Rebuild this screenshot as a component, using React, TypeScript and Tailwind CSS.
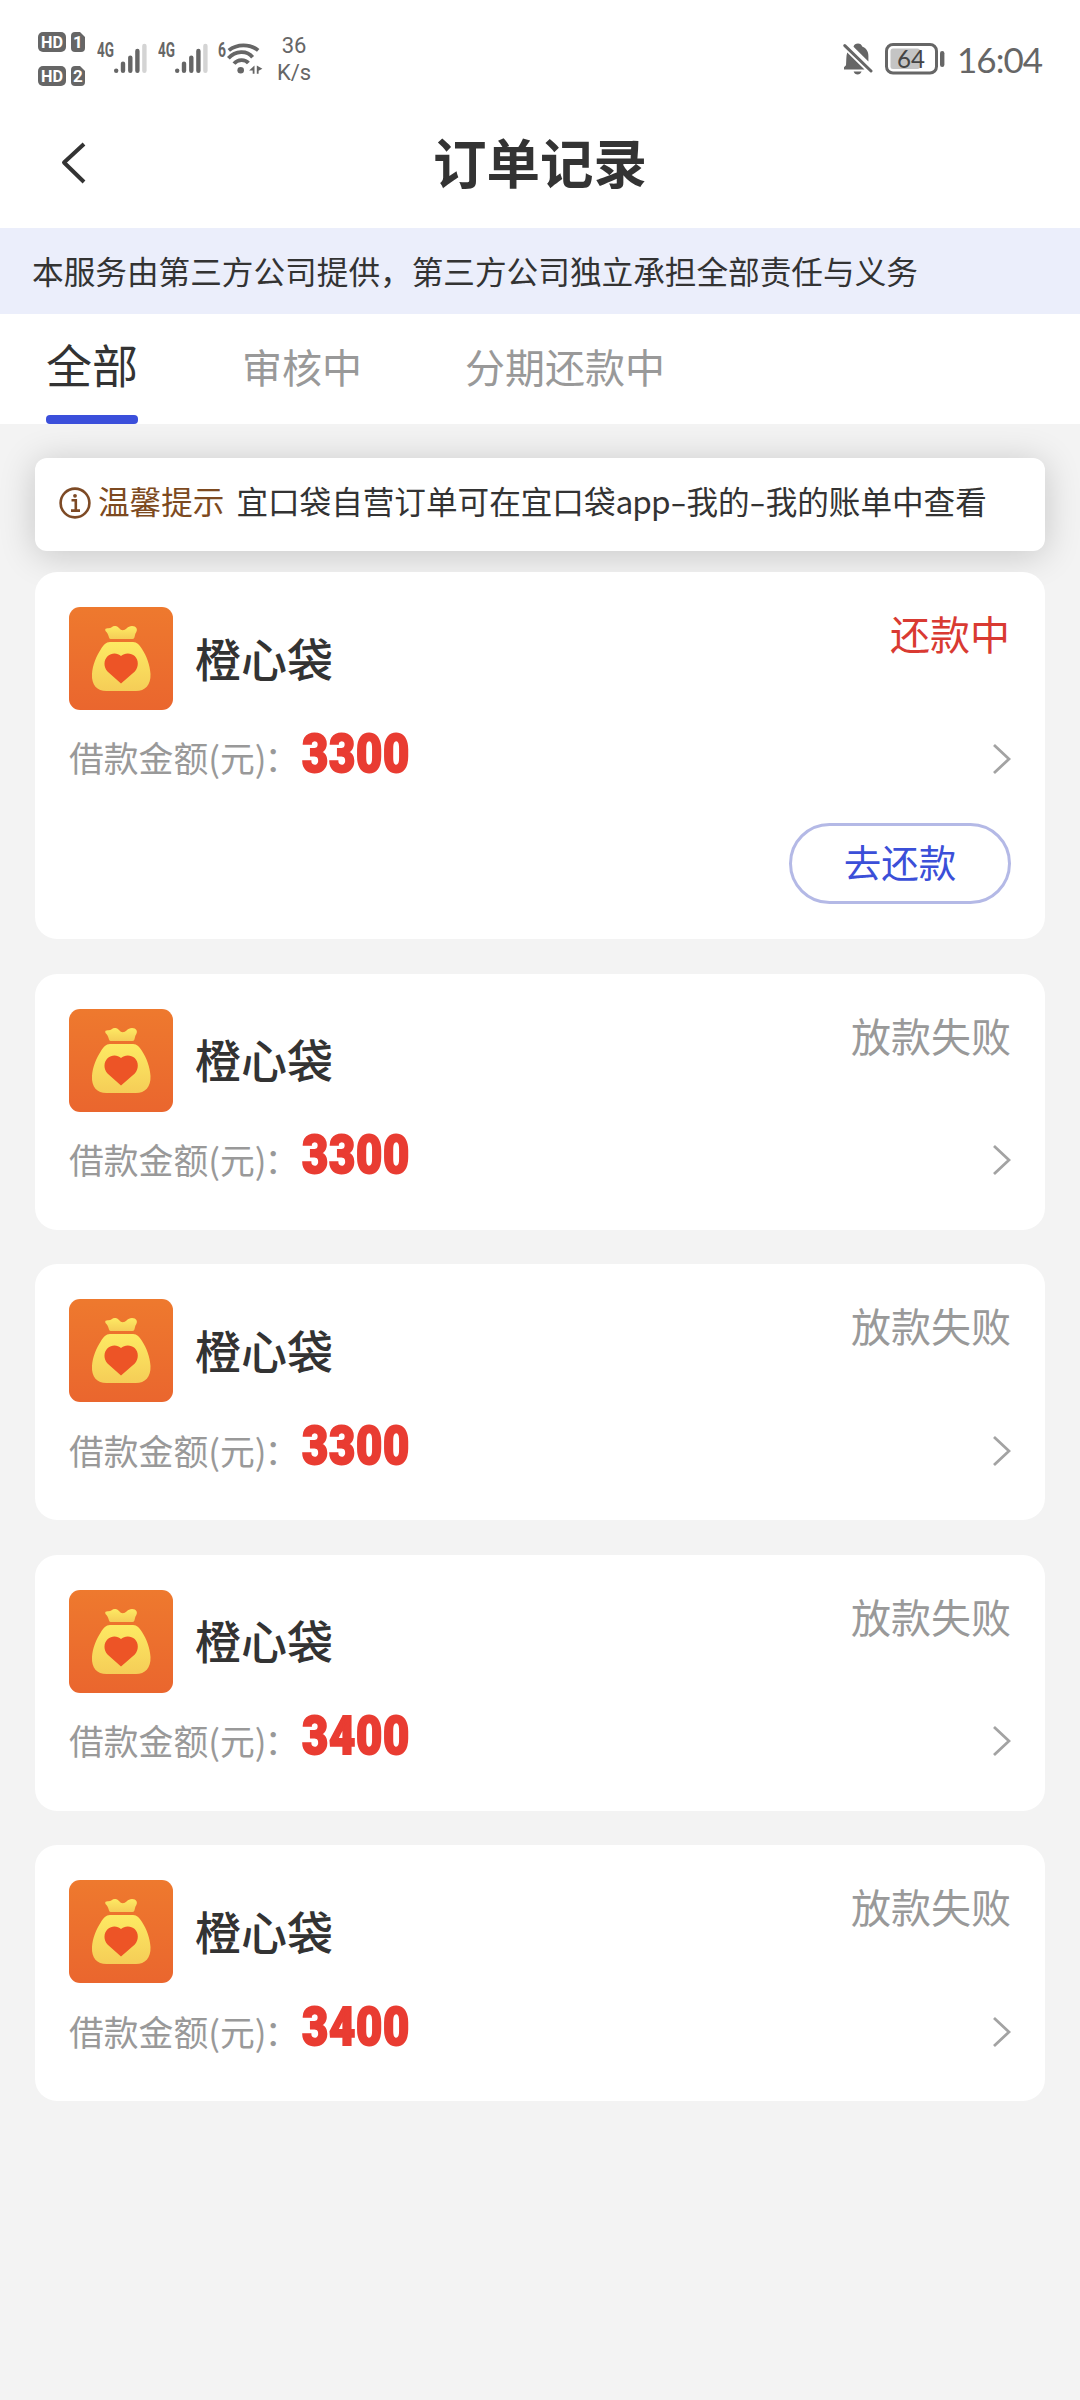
import { clsx } from 'clsx';

type OrderStatus = 'repaying' | 'failed';

interface Order {
  id: number;
  name: string;
  amount: number;
  status: OrderStatus;
}

const orders: Order[] = [
  { id: 1, name: '橙心袋', amount: 3300, status: 'repaying' },
  { id: 2, name: '橙心袋', amount: 3300, status: 'failed' },
  { id: 3, name: '橙心袋', amount: 3300, status: 'failed' },
  { id: 4, name: '橙心袋', amount: 3400, status: 'failed' },
  { id: 5, name: '橙心袋', amount: 3400, status: 'failed' },
];

const statusText: Record<OrderStatus, string> = {
  repaying: '还款中',
  failed: '放款失败',
};

function HdBadge({ sim }: { sim: number }) {
  return (
    <svg width="48" height="20" viewBox="0 0 48 20">
      <rect width="28" height="20" rx="5" fill="#666" />
      <text x="14" y="16" textAnchor="middle" fontSize="17" fontWeight="700" fill="#fff" textLength="22" lengthAdjust="spacingAndGlyphs" fontFamily="Roboto, sans-serif">
        HD
      </text>
      <path d="M37 0h5l5 5v11a4 4 0 0 1-4 4h-6a4 4 0 0 1-4-4V4a4 4 0 0 1 4-4z" fill="#666" />
      <text x="40" y="16" textAnchor="middle" fontSize="17" fontWeight="700" fill="#fff" fontFamily="Roboto, sans-serif">
        {sim}
      </text>
    </svg>
  );
}

function Signal() {
  return (
    <svg width="50" height="36" viewBox="0 -4 50 36">
      <text x="0" y="14.500" fontSize="19.500" fontWeight="700" fill="#666" textLength="17" lengthAdjust="spacingAndGlyphs" fontFamily="Roboto, sans-serif">
        4G
      </text>
      <g strokeWidth="4.4" strokeLinecap="round" stroke="#666">
        <path d="M19.2 28.6v.2M26 21.6v7.2M33.3 15.6v13.2M40.4 9v19.8" />
        <path d="M47.4 4v24.8" stroke="#d4d4d4" />
      </g>
    </svg>
  );
}

function Wifi() {
  return (
    <svg width="46" height="38" viewBox="0 -4 46 38">
      <text x="0" y="14.500" fontSize="19.500" fontWeight="700" fill="#666" textLength="8" lengthAdjust="spacingAndGlyphs" fontFamily="Roboto, sans-serif">
        6
      </text>
      <g fill="none" stroke="#666" strokeWidth="3.8">
        <path d="M10.8 8.4C19 1.6 32 1.6 40.2 8.4" />
        <path d="M10.4 16.2C17.5 8.4 29 8.2 34.6 15.2" />
        <path d="M16 21.6C19.8 17 27 17 30.4 21" />
      </g>
      <circle cx="22.7" cy="28.2" r="3.3" fill="#666" />
      <path d="M36.5 23.4v8.4h-1.8v-3.400h-3.600zM38.8 23.400v8.400h1.800v-3l3.800-2z" fill="#666" />
    </svg>
  );
}

function BellOff() {
  return (
    <svg width="30" height="32" viewBox="0 0 30 32">
      <path d="M10.5 3.8C11 1.6 12.8.6 15 .6s3.6 1 4.200 3c4.200 1.600 6.200 5 6.200 9.400v5.600z" fill="#666" />
      <path d="M4.200 9.500 21.500 26.400H1v-2.200l2-2c.4-4.200 0-9 1.200-12.700z" fill="#666" />
      <path d="M10.600 28.400h8c-.8 2-2.200 3-4 3s-3.400-1-4-3z" fill="#666" />
      <path d="M1.800 2.600 28 28" stroke="#666" strokeWidth="3" strokeLinecap="round" />
    </svg>
  );
}

function Battery() {
  return (
    <svg width="60" height="32" viewBox="0 0 60 32">
      <rect x="1.500" y="1.500" width="50" height="28.500" rx="6.500" fill="none" stroke="#666" strokeWidth="3" />
      <rect x="5.500" y="5.500" width="29.500" height="20.500" rx="2.500" fill="#c4c4c4" />
      <text x="26" y="24.500" textAnchor="middle" fontSize="25.500" fill="#444" textLength="28" lengthAdjust="spacingAndGlyphs" fontFamily="Lato, sans-serif">
        64
      </text>
      <rect x="55" y="8" width="4.400" height="16" rx="2.200" fill="#666" />
    </svg>
  );
}

function StatusBar() {
  return (
    <div className="flex h-[100px] items-start text-[#666]">
      <div className="ml-[38px] mt-8 flex flex-col gap-[14px]">
        <HdBadge sim={1} />
        <HdBadge sim={2} />
      </div>
      <div className="ml-[11px] mt-[38px] flex gap-[11px]">
        <Signal />
        <Signal />
        <div className="-ml-px">
          <Wifi />
        </div>
      </div>
      <div className="ml-[10px] mt-8 w-10 text-center font-[Roboto,sans-serif] text-[22px] leading-[27px]">
        <div>36</div>
        <div>K/s</div>
      </div>
      <div className="mt-[43px] mr-[38px] ml-auto flex">
        <BellOff />
        <span className="ml-[12px]">
          <Battery />
        </span>
        <span className="-mt-px ml-[12px] font-[Lato,sans-serif] text-[35px] leading-[34px] tracking-[-1px]">16:04</span>
      </div>
    </div>
  );
}

function BagLogo() {
  return (
    <svg width="104" height="103" viewBox="0 0 104 103" className="shrink-0">
      <defs>
        <linearGradient id="logoBg" x1="0" y1="0" x2="0" y2="1">
          <stop offset="0" stopColor="#ee792e" />
          <stop offset="1" stopColor="#ea662e" />
        </linearGradient>
        <linearGradient id="logoBag" x1="0" y1="0" x2="0" y2="1">
          <stop offset="0" stopColor="#fdea63" />
          <stop offset="1" stopColor="#f5cd57" />
        </linearGradient>
      </defs>
      <rect width="104" height="103" rx="11" fill="url(#logoBg)" />
      <path
        d="M36.500 24c-1-2.200.6-2.800 2.800-2.700 3 .1 3.800-2.500 7-2.300 3.600.2 4.500 4.300 7.500 4.300S58.500 19 63 19c4.300 0 6 3.200 4.200 6.200-2 2.800-1 6.800-3.700 6.800H41.600c-2.200 0-1.500-5.200-5.100-8z"
        fill="url(#logoBag)"
      />
      <path
        d="M41 35h23c4 0 6.500 3 9 7C77.500 49 81 58 81.500 67c.5 11-5.500 17-14.500 17H37.500C28 84 22.400 78 23 67c.5-9 4.500-18 9-25 2.500-4 5-7 9-7z"
        fill="url(#logoBag)"
      />
      <path
        d="M52 49C48.500 45.500 42.500 45.500 38.800 49c-4.400 4.300-4.300 11-.3 15.500L52 76.500l13.800-12c4-4.500 4.100-11.200-.1-15.500C62 45.500 55.500 45.500 52 49z"
        fill="#ed5426"
      />
    </svg>
  );
}

function OrderCard({ order }: { order: Order }) {
  const repaying = order.status === 'repaying';

  return (
    <div className="rounded-[22px] bg-white px-[34px] py-[35px]">
      <div className="flex h-[103px]">
        <BagLogo />
        <div className="mb-1 ml-[22px] self-center text-[46px] leading-[60px] font-medium text-[#333]">
          {order.name}
        </div>
        <div
          className={clsx(
            'ml-auto text-[40px] leading-[52px]',
            repaying ? 'mr-px text-[#d93a32]' : 'text-[#999]'
          )}
        >
          {statusText[order.status]}
        </div>
      </div>
      <div className="flex h-[83px] items-center">
        <span className="mt-3 w-[233px] text-[34.8px] whitespace-nowrap text-[#999]">
          借款金额(元<span className="tracking-[-2px]">)</span>：
        </span>
        <span className="mt-1 origin-left scale-x-[0.84] font-[Roboto,sans-serif] text-[54px] leading-none font-black tracking-[0.8px] text-[#e93c32] [-webkit-text-stroke:2px_#e93c32]">
          {order.amount}
        </span>
        <svg width="20" height="32" viewBox="0 0 20 32" className="mt-[14px] ml-auto">
          <path d="M3 2 18 16 3 30" fill="none" stroke="#a3a3a3" strokeWidth="2.8" />
        </svg>
      </div>
      {repaying && (
        <div className="mt-[30px] flex justify-end">
          <button className="h-[81px] w-[222px] rounded-full border-3 border-[#b4b9e6] pb-1.5 text-[37.5px] leading-none text-[#3b4fd8]">
            去还款
          </button>
        </div>
      )}
    </div>
  );
}

function App() {
  return (
    <div className="min-h-[2400px] w-[1080px] bg-[#f3f3f3] font-['Noto_Sans_CJK_SC',sans-serif] text-[#333]">
      <div className="bg-white">
        <StatusBar />
        <div className="flex h-32 items-center">
          <svg width="30" height="44" viewBox="0 0 30 44" className="ml-[59px]">
            <path d="M25 2 5 20.5 25 40" fill="none" stroke="#333" strokeWidth="4" strokeLinejoin="round" />
          </svg>
          <h1 className="mr-[89px] mb-1.5 flex-1 text-center text-[53.5px] leading-[60px] font-bold">订单记录</h1>
        </div>
      </div>

      <div className="flex h-[86px] items-center bg-[#ebeefb] pl-8 text-[31.65px]">
        本服务由第三方公司提供，第三方公司独立承担全部责任与义务
      </div>

      <div className="flex h-[110px] items-start bg-white pl-[46px]">
        <div className="flex h-full w-[92px] flex-col items-center justify-between">
          <span className="mt-[19px] text-[46px] leading-[60px]">全部</span>
          <span className="h-[9px] w-full rounded-[4px] bg-[#3b4fdb]" />
        </div>
        <span className="mt-[26px] ml-[104px] text-[40px] leading-[52px] text-[#999]">审核中</span>
        <span className="mt-[26px] ml-[103px] text-[40px] leading-[52px] text-[#999]">分期还款中</span>
      </div>

      <div className="px-[35px] pt-[34px]">
        <div className="flex h-[93px] items-center rounded-[12px] bg-white pl-6 text-[31.6px] whitespace-nowrap shadow-[0_4px_36px_rgba(0,0,0,0.19)]">
          <svg width="32" height="32" viewBox="0 0 32 32" className="mr-[7px] mb-[3px]">
            <circle cx="16" cy="16" r="14.4" fill="none" stroke="#7d4a25" strokeWidth="2.6" />
            <path d="M12.5 13.2h4.300v10.300M12 23.600h9" fill="none" stroke="#7d4a25" strokeWidth="2.600" />
            <circle cx="16" cy="8.800" r="1.900" fill="#7d4a25" />
          </svg>
          <span className="mb-[7px] text-[#7d4a20]">温馨提示</span>
          <span className="mb-[7px] ml-3">
            宜口袋自营订单可在宜口袋<span className="tracking-[-1px]">app</span>
            <span className="mr-[3px] ml-[3px] inline-block scale-x-150">-</span>我的
            <span className="mr-[3px] ml-[2px] inline-block scale-x-150">-</span>我的账单中查看
          </span>
        </div>

        <div className="mt-[21px] flex flex-col gap-[34.6px]">
          {orders.map((order) => (
            <OrderCard key={order.id} order={order} />
          ))}
        </div>
      </div>
    </div>
  );
}

export default App;
